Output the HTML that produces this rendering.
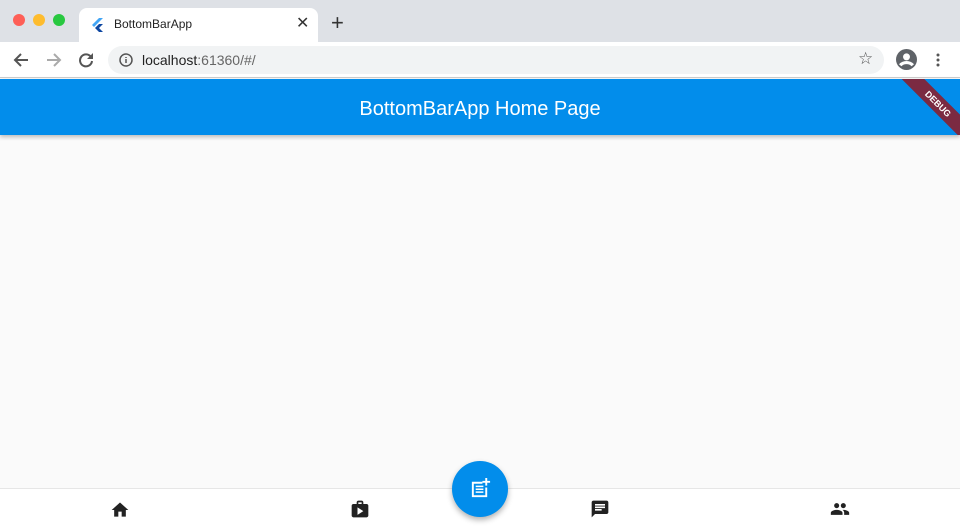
<!DOCTYPE html>
<html><head><style>
*{margin:0;padding:0;box-sizing:border-box}
body{width:960px;height:529px;overflow:hidden;font-family:"Liberation Sans",sans-serif;background:#fafafa;position:relative}
.tabs{position:absolute;left:0;top:0;width:960px;height:42px;background:#dee1e6}
.dot{position:absolute;top:14px;width:12px;height:12px;border-radius:50%}
.tab{position:absolute;left:79px;top:8px;width:239px;height:34px;background:#fff;border-radius:8px 8px 0 0}
.tool{position:absolute;left:0;top:42px;width:960px;height:36px;background:#fff;border-bottom:1px solid #ccc}
.url{position:absolute;left:108px;top:4px;width:776px;height:28px;background:#f1f3f4;border-radius:14px}
.appbar{position:absolute;left:0;top:79px;width:960px;height:56px;background:#028deb;box-shadow:0 2px 4px rgba(0,0,0,.25);overflow:hidden}
.appbar h1{font-weight:normal;color:#fff;font-size:20px;text-align:center;line-height:60px}
.ribbon{position:absolute;right:-40px;top:17px;width:124px;height:16px;background:#7b2a42;transform:rotate(45deg);color:#fff;font-size:9px;font-weight:bold;text-align:center;line-height:16px}
.bottom{position:absolute;left:0;top:488px;width:960px;height:41px;background:#fff;border-top:1px solid #e6e6e6}
.fab{position:absolute;left:452px;top:461px;width:56px;height:56px;border-radius:50%;background:#028deb;box-shadow:0 3px 6px rgba(0,0,0,.3)}
svg{position:absolute}
</style></head><body>
<div class="tabs">
<div class="dot" style="left:13px;background:#fe5f57"></div>
<div class="dot" style="left:33px;background:#febc2e"></div>
<div class="dot" style="left:53px;background:#28c840"></div>
<div class="tab">
<svg style="left:13px;top:10px" width="12" height="14" viewBox="0 0 12 14"><path d="M7 0L0 7l2 2 9-9z" fill="#42a5f5"/><path d="M7 6L3 10l4 4h4L7 10l4-4z" fill="#0d47a1"/></svg>
<span style="position:absolute;left:35px;top:9px;font-size:12px;color:#222">BottomBarApp</span>
<span style="position:absolute;left:217px;top:5px;font-size:16px;color:#333">✕</span>
</div>
<span style="position:absolute;left:331px;top:12px;font-size:22px;color:#333;line-height:22px">+</span>
</div>
<div class="tool">
<svg style="left:13px;top:10px" width="16" height="16" viewBox="0 0 16 16"><path d="M15 8H2M8 2L2 8l6 6" stroke="#555" stroke-width="2" fill="none"/></svg>
<svg style="left:46px;top:10px" width="16" height="16" viewBox="0 0 16 16"><path d="M1 8h13M8 2l6 6-6 6" stroke="#aaa" stroke-width="2" fill="none"/></svg>
<svg style="left:78px;top:10px" width="16" height="16" viewBox="0 0 16 16"><path d="M13 5A6 6 0 1 0 14 9" stroke="#555" stroke-width="2" fill="none"/><path d="M15 1v6H9z" fill="#555"/></svg>
<div class="url">
<svg style="left:11px;top:7px" width="14" height="14" viewBox="0 0 14 14"><circle cx="7" cy="7" r="6" stroke="#555" stroke-width="1.5" fill="none"/><path d="M7 6v4M7 4v1" stroke="#555" stroke-width="1.5"/></svg>
<span style="position:absolute;left:34px;top:6px;font-size:14px;color:#222">localhost<span style="color:#666">:61360/#/</span></span>
<span style="position:absolute;left:750px;top:3px;font-size:17px;color:#555">☆</span>
</div>
<svg style="left:896px;top:7px" width="21" height="21" viewBox="0 0 20 20"><circle cx="10" cy="10" r="10" fill="#5f6368"/><circle cx="10" cy="7.5" r="3.3" fill="#fff"/><path d="M4 15.5c3-3.5 9-3.5 12 0" stroke="#fff" stroke-width="3" fill="none"/></svg>
<svg style="left:936px;top:11px" width="4" height="14" viewBox="0 0 4 14"><circle cx="2" cy="2" r="1.5" fill="#555"/><circle cx="2" cy="7" r="1.5" fill="#555"/><circle cx="2" cy="12" r="1.5" fill="#555"/></svg>
</div>
<div class="appbar"><h1>BottomBarApp Home Page</h1><div class="ribbon">DEBUG</div></div>
<div class="bottom">
<svg style="left:110px;top:11px" width="20" height="20" viewBox="0 0 24 24"><path d="M10 20v-6h4v6h5v-8h3L12 3 2 12h3v8z" fill="#222"/></svg>
<svg style="left:350px;top:10px" width="20" height="20" viewBox="0 0 24 24"><path d="M10 2h4c1 0 2 1 2 2v2h4c1 0 2 1 2 2v12c0 1-1 2-2 2H4c-1 0-2-1-2-2V8c0-1 1-2 2-2h4V4c0-1 1-2 2-2zm0 4h4V4h-4zM9 10v9l7-4.5z" fill="#222"/></svg>
<svg style="left:590px;top:10px" width="20" height="20" viewBox="0 0 24 24"><path d="M20 2H4C3 2 2 3 2 4v18l4-4h14c1 0 2-1 2-2V4c0-1-1-2-2-2zM6 9h12v2H6zm8 5H6v-2h8zm4-6H6V6h12z" fill="#222"/></svg>
<svg style="left:829px;top:10px" width="22" height="20" viewBox="0 0 24 24"><path d="M16 11c1.7 0 3-1.3 3-3s-1.3-3-3-3-3 1.3-3 3 1.3 3 3 3zm-8 0c1.7 0 3-1.3 3-3S9.7 5 8 5 5 6.3 5 8s1.3 3 3 3zm0 2c-2.3 0-7 1.2-7 3.5V19h14v-2.5C15 14.2 10.3 13 8 13zm8 0c-.3 0-.6 0-1 .1 1.2.8 2 1.9 2 3.4V19h6v-2.5c0-2.3-4.7-3.5-7-3.5z" fill="#222"/></svg>
</div>
<div class="fab">
<svg style="left:17px;top:16px" width="23" height="23" viewBox="0 0 24 24"><path d="M3 5h11v2H5v12h12v-8h2v10H3z" fill="#fff"/><path d="M7 9h8v1.6H7zm0 3h8v1.6H7zm0 3h8v1.6H7zM17 1h2v3h3v2h-3v3h-2V6h-3V4h3z" fill="#fff"/></svg>
</div>
</body></html>
